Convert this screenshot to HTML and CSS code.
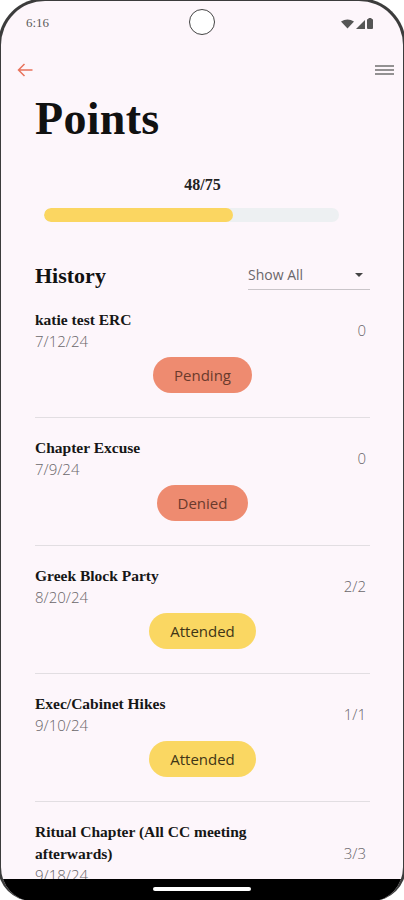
FILE: index.html
```html
<html>
<head>
<title>Points</title>
<link rel="stylesheet" href="styles.css">
</head>
<body>
<div id="screen">
	<div id="statusBar">
		<span class="time">6:16</span>
		<div class="camera"></div>
		<div class="sysIcons">
			<svg width="13" height="10" viewBox="0 0 13 10"><path d="M0 2.5 Q6.5 -1.5 13 2.5 L6.5 9.5 Z" fill="#555"/></svg>
			<svg width="9" height="9" viewBox="0 0 9 9"><path d="M9 0 L9 9 L0 9 Z" fill="#555"/></svg>
			<svg width="6" height="11" viewBox="0 0 6 11"><rect x="1.5" y="0" width="3" height="1.5" fill="#555"/><rect x="0" y="1" width="6" height="10" rx="1" fill="#555"/></svg>
		</div>
	</div>

	<div id="appBar">
		<svg width="16" height="14" viewBox="0 0 16 14"><path d="M15.5 7 H1.5 M7.5 1 L1.5 7 L7.5 13" fill="none" stroke="#e8735c" stroke-width="1.5"/></svg>
		<svg width="19" height="10" viewBox="0 0 19 10"><path d="M0 1 H19 M0 5 H19 M0 9 H19" stroke="#707070" stroke-width="1.4"/></svg>
	</div>

	<div id="content">
		<h1 class="pageTitle">Points</h1>

		<div class="progressCount">48/75</div>
		<div class="progressTrack"><div class="progressFill" style="width: 64%"></div></div>

		<div class="historyHeader">
			<h2>History</h2>
			<div class="dropdown">
				<span>Show All</span>
				<svg width="8" height="4" viewBox="0 0 8 4"><path d="M0 0 L8 0 L4 4 Z" fill="#444"/></svg>
			</div>
		</div>

		<div class="item">
			<div class="itemRow">
				<div class="info">
					<div class="itemTitle">katie test ERC</div>
					<div class="itemDate">7/12/24</div>
				</div>
				<div class="value">0</div>
			</div>
			<div class="pill pending">Pending</div>
		</div>

		<div class="item">
			<div class="itemRow">
				<div class="info">
					<div class="itemTitle">Chapter Excuse</div>
					<div class="itemDate">7/9/24</div>
				</div>
				<div class="value">0</div>
			</div>
			<div class="pill denied">Denied</div>
		</div>

		<div class="item">
			<div class="itemRow">
				<div class="info">
					<div class="itemTitle">Greek Block Party</div>
					<div class="itemDate">8/20/24</div>
				</div>
				<div class="value">2/2</div>
			</div>
			<div class="pill attended">Attended</div>
		</div>

		<div class="item">
			<div class="itemRow">
				<div class="info">
					<div class="itemTitle">Exec/Cabinet Hikes</div>
					<div class="itemDate">9/10/24</div>
				</div>
				<div class="value">1/1</div>
			</div>
			<div class="pill attended">Attended</div>
		</div>

		<div class="item">
			<div class="itemRow">
				<div class="info">
					<div class="itemTitle">Ritual Chapter (All CC meeting<br>afterwards)</div>
					<div class="itemDate">9/18/24</div>
				</div>
				<div class="value">3/3</div>
			</div>
			<div class="pill attended">Attended</div>
		</div>
	</div>

	<div id="navBar"><div class="homeHandle"></div></div>
</div>
</body>
</html>
```

FILE: styles.css
```css
body {
	margin: 0;
	background: #fff;
	overflow: hidden;
}
#screen {
	box-sizing: border-box;
	width: 408px;
	height: 903px;
	margin: -2px -2px 0 -2px;
	border: 3px solid #3c3c3c;
	border-bottom: 0;
	border-radius: 47px 47px 34px 34px;
	background: #fdf6fb;
	overflow: hidden;
	display: flex;
	flex-direction: column;
	position: relative;
}
#statusBar {
	height: 44px;
	flex-shrink: 0;
	display: flex;
	align-items: center;
	justify-content: space-between;
	padding: 0 30px 0 25px;
}
#statusBar .time {
	font: 13px 'Liberation Serif', serif;
	color: #5c5c5c;
}
#statusBar .camera {
	position: absolute;
	left: 188px;
	top: 8px;
	width: 24px;
	height: 24px;
	border: 1px solid #444;
	border-radius: 50%;
	background: #fff;
}
.sysIcons {
	display: flex;
	align-items: flex-end;
	gap: 2px;
}
#appBar {
	height: 48px;
	flex-shrink: 0;
	display: flex;
	align-items: center;
	justify-content: space-between;
	padding: 2px 9px 0 16px;
	box-sizing: border-box;
}
#content {
	flex: 1;
	overflow: hidden;
	padding: 0 33px 0 34px;
}
.pageTitle {
	margin: 0;
	font: bold 46px/52px 'Liberation Serif', serif;
	color: #111;
	letter-spacing: 0.3px;
}
.progressCount {
	margin-top: 30px;
	text-align: center;
	font: bold 16px/20px 'Liberation Serif', serif;
	color: #222;
}
.progressTrack {
	margin: 13px 0 0 9px;
	width: 295px;
	height: 14px;
	border-radius: 7px;
	background: #edf0f2;
	overflow: hidden;
}
.progressFill {
	height: 100%;
	border-radius: 7px;
	background: #fbd661;
}
.historyHeader {
	margin-top: 38px;
	height: 30px;
	display: flex;
	align-items: flex-end;
	justify-content: space-between;
}
.historyHeader h2 {
	margin: 0;
	font: bold 22px/28px 'Liberation Serif', serif;
	color: #111;
}
.dropdown {
	box-sizing: border-box;
	width: 122px;
	height: 30px;
	border-bottom: 1px solid #c9c5c9;
	display: flex;
	align-items: center;
	justify-content: space-between;
	padding: 0 7px 0 0;
	font: 14px 'Open Sans', sans-serif;
	color: #6a666a;
}
.item {
	border-bottom: 1px solid #e2dee2;
	padding: 19px 0 24px 0;
}
.itemRow {
	display: flex;
	align-items: center;
	justify-content: space-between;
	padding-right: 4px;
}
.itemTitle {
	font: bold 15.5px/22px 'Liberation Serif', serif;
	color: #161616;
}
.itemDate {
	font: 300 15px/21px 'Open Sans', sans-serif;
	color: #6a666a;
}
.value {
	font: 300 15px/21px 'Open Sans', sans-serif;
	color: #6a666a;
}
.pill {
	display: table;
	margin: 5px auto 0 auto;
	height: 36px;
	padding: 0 21px;
	border-radius: 18px;
	font: 15px/36px 'Open Sans', sans-serif;
}
.pending, .denied {
	background: #ee8b70;
	color: #6a3a2c;
}
.attended {
	background: #fad762;
	color: #3f3516;
}
#navBar {
	height: 22px;
	flex-shrink: 0;
	background: #000;
	display: flex;
	justify-content: center;
	padding-top: 8px;
	box-sizing: border-box;
}
.homeHandle {
	width: 98px;
	height: 4px;
	border-radius: 2px;
	background: #fff;
}
```
